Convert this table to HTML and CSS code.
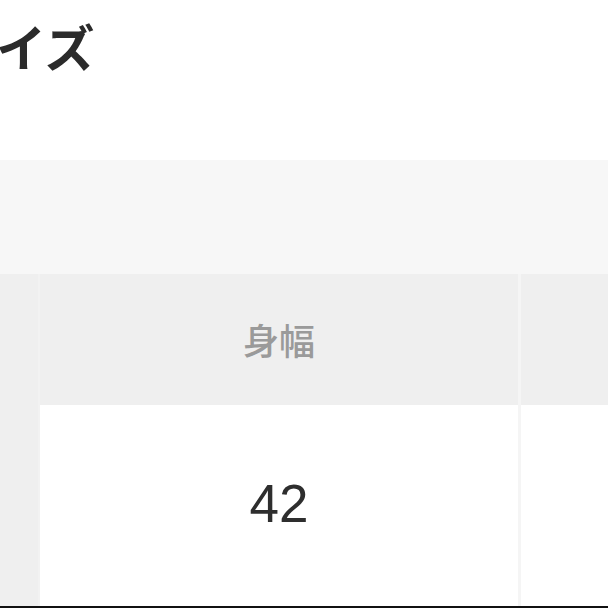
FILE: index.html
```html
<!DOCTYPE html>
<html lang="ja">
<head>
<meta charset="utf-8">
<link rel="stylesheet" href="styles.css">
</head>
<body>
<div class="page">
  <h2 class="title">サイズ</h2>
  <div class="band"></div>
  <div class="table">
    <div class="side"></div>
    <div class="cell head">身幅</div>
    <div class="cell head next"></div>
    <div class="cell data">42</div>
    <div class="cell data next"></div>
  </div>
  <div class="rule"></div>
</div>
</body>
</html>
```
FILE: styles.css
```css
html, body {
  margin: 0;
  padding: 0;
  background: #ffffff;
}
.page {
  width: 608px;
  height: 608px;
  overflow: hidden;
  display: flex;
  flex-direction: column;
}
.title {
  margin: 0 0 0 -54px;
  height: 160px;
  box-sizing: border-box;
  padding-top: 20px;
  font-family: "Noto Sans CJK JP", sans-serif;
  font-size: 50px;
  line-height: 1;
  font-weight: 700;
  color: #2b2b2b;
  white-space: nowrap;
}
.band {
  height: 114px;
  background: #f7f7f7;
}
.table {
  display: grid;
  grid-template-columns: 40px 481px 1fr;
  grid-template-rows: 131px 201px;
  background: #f4f4f4;
}
.side {
  grid-row: 1 / 3;
  background: #efefef;
  border-right: 2px solid #f2f2f2;
}
.cell {
  display: flex;
  align-items: center;
  justify-content: center;
  border-right: 3px solid #f5f5f5;
}
.cell.next {
  border-right: none;
}
.head {
  background: #efefef;
  font-family: "Noto Sans CJK JP", sans-serif;
  font-size: 36px;
  font-weight: 500;
  color: #9a9a9a;
  padding-bottom: 2px;
}
.data {
  background: #ffffff;
  font-family: "Liberation Sans", Arial, sans-serif;
  font-size: 53px;
  color: #2e2e2e;
  padding-bottom: 4px;
}
.rule {
  height: 2px;
  background: #111111;
}
```
